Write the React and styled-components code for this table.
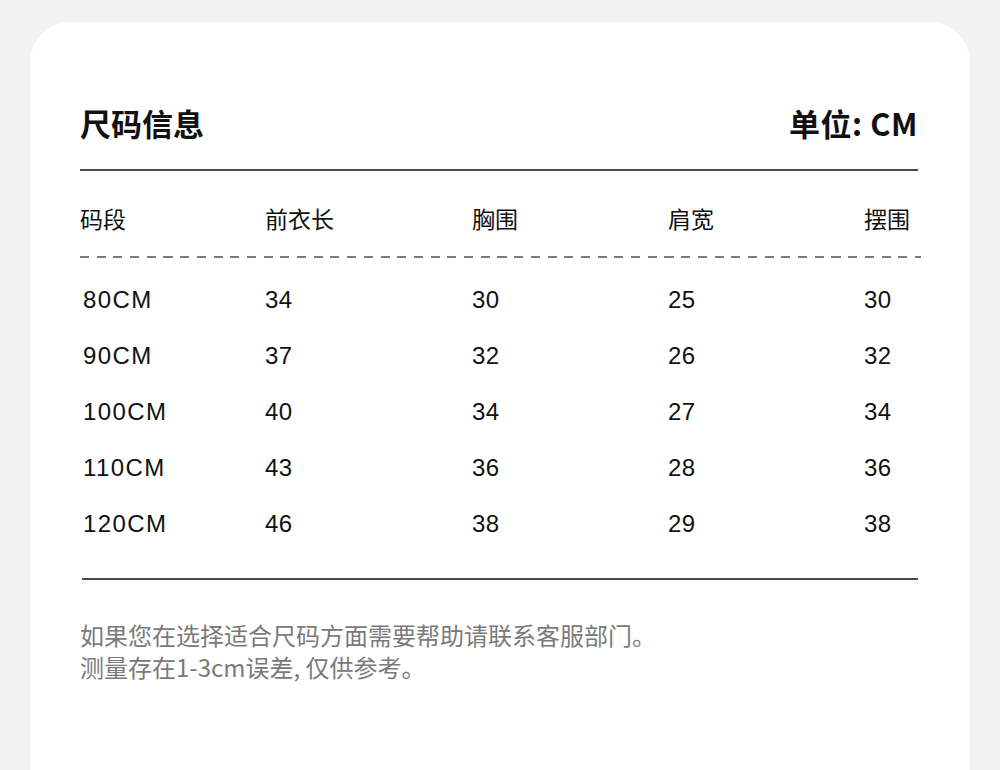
import React from "react";
import styled, { createGlobalStyle } from "styled-components";

const rows = [
  ["80CM", "34", "30", "25", "30"],
  ["90CM", "37", "32", "26", "32"],
  ["100CM", "40", "34", "27", "34"],
  ["110CM", "43", "36", "28", "36"],
  ["120CM", "46", "38", "29", "38"],
];

const headers = ["码段", "前衣长", "胸围", "肩宽", "摆围"];

const Global = createGlobalStyle`
  html, body {
    margin: 0;
    padding: 0;
    background: #f2f2f2;
  }
  body {
    font-family: "Liberation Sans", "Noto Sans CJK SC", sans-serif;
  }
`;

const Page = styled.div`
  width: 1000px;
  height: 770px;
  overflow: hidden;
  padding: 22px 30px 0 30px;
  box-sizing: border-box;
`;

const Card = styled.div`
  background: #fff;
  border-radius: 40px 40px 0 0;
  height: 800px;
  padding: 80px 52px 0 50px;
  box-sizing: border-box;
`;

const TitleBar = styled.div`
  display: flex;
  justify-content: space-between;
  align-items: center;
  height: 40px;
  font-family: "Noto Sans CJK SC", "Liberation Sans", sans-serif;
  font-weight: 700;
  font-size: 31px;
  color: #111;
`;

const Unit = styled.span`
  letter-spacing: 0.5px;
`;

const Rule = styled.div`
  height: 2px;
  background: #4a4a4a;
  margin: ${(p) => p.$m};
`;

const Dashed = styled.div`
  height: 2px;
  width: 841px;
  background: repeating-linear-gradient(
    to right,
    #7a7a7a 0 9px,
    transparent 9px 16.7px
  );
`;

const Grid = styled.div`
  display: grid;
  grid-template-columns: 185px 207px 196px 196px auto;
  align-items: center;
`;

const HeadRow = styled(Grid)`
  height: 30px;
  margin: 30px 0 25px;
  font-family: "Noto Sans CJK SC", sans-serif;
  font-size: 23px;
  color: #111;
`;

const Body = styled.div`
  margin: 14px 0 26px;
`;

const Row = styled(Grid)`
  height: 56px;
  font-family: "Liberation Sans", "Noto Sans CJK SC", sans-serif;
  font-size: 24px;
  color: #111;
`;

const Cell = styled.span`
  padding-left: ${(p) => (p.$first ? "3px" : "0")};
  letter-spacing: ${(p) => (p.$first ? "1.4px" : "0.4px")};
`;

const Note = styled.div`
  margin-top: 39px;
  font-family: "Noto Sans CJK SC", sans-serif;
  font-size: 24px;
  line-height: 32px;
  color: #7a7a7a;
`;

export default function App() {
  return (
    <Page>
      <Global />
      <Card>
        <TitleBar>
          <span>尺码信息</span>
          <Unit>单位: CM</Unit>
        </TitleBar>
        <Rule $m="27px 0 0" />
        <HeadRow>
          {headers.map((h) => (
            <span key={h}>{h}</span>
          ))}
        </HeadRow>
        <Dashed />
        <Body>
          {rows.map((r) => (
            <Row key={r[0]}>
              {r.map((v, i) => (
                <Cell key={i} $first={i === 0}>
                  {v}
                </Cell>
              ))}
            </Row>
          ))}
        </Body>
        <Rule $m="0 0 0 2px" />
        <Note>
          如果您在选择适合尺码方面需要帮助请联系客服部门。
          <br />
          测量存在1-3cm误差, 仅供参考。
        </Note>
      </Card>
    </Page>
  );
}
